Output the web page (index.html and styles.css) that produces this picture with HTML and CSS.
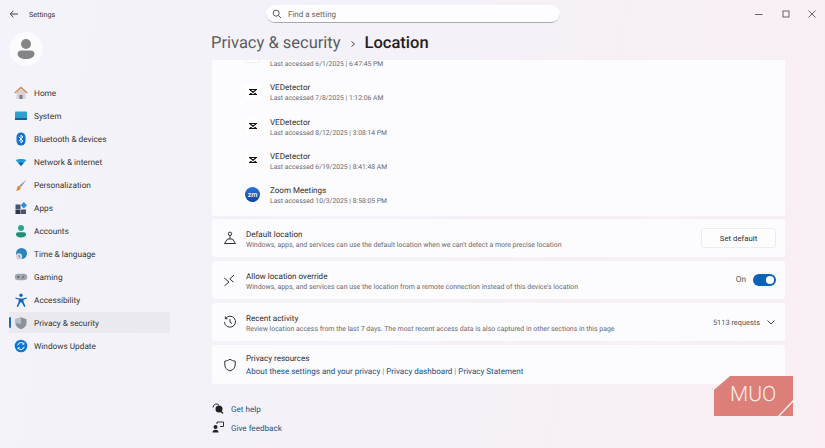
FILE: index.html
```html
<!DOCTYPE html>
<html lang="en">

<head>
    <meta charset="UTF-8">
    <meta name="viewport" content="width=device-width, initial-scale=1.0">
    <title>Settings</title>
    <link rel="stylesheet" href="styles.css">
</head>

<body>
    <div class="window">
        <!-- title bar -->
        <header class="titlebar">
            <div class="title-left">
                <svg class="back" width="10" height="10" viewBox="0 0 10 10"><path d="M9 5H1.2M4.4 1.8 1.2 5l3.2 3.2" fill="none" stroke="#444" stroke-width="1"/></svg>
                <span class="app-name">Settings</span>
            </div>
            <div class="search">
                <svg width="10" height="10" viewBox="0 0 10 10"><circle cx="4.2" cy="4.2" r="3" fill="none" stroke="#555" stroke-width="1"/><path d="M6.4 6.4 9 9" stroke="#555" stroke-width="1"/></svg>
                <span>Find a setting</span>
            </div>
            <div class="win-controls">
                <svg width="10" height="10" viewBox="0 0 10 10"><path d="M1 5.500h7.500" stroke="#666" stroke-width="1"/></svg>
                <svg width="10" height="10" viewBox="0 0 10 10"><rect x="2" y="2" width="6" height="6" fill="none" stroke="#666" stroke-width="1"/></svg>
                <svg width="10" height="10" viewBox="0 0 10 10"><path d="M1.500 1.500l7 7M8.500 1.500l-7 7" stroke="#666" stroke-width="1"/></svg>
            </div>
        </header>

        <div class="body-row">
            <!-- left nav -->
            <aside class="sidebar">
                <div class="avatar">
                    <svg width="20" height="22" viewBox="0 0 20 22"><circle cx="10" cy="6" r="5" fill="#858585"/><path d="M1.500 16c0-2.500 2-3.500 3.500-3.500h10c1.500 0 3.500 1 3.500 3.500 0 3-4 5-8.500 5s-8.500-2-8.500-5z" fill="#858585"/></svg>
                </div>
                <nav class="nav">
                    <a class="nav-item">
                        <svg width="14" height="14" viewBox="0 0 14 14"><path d="M2.500 6.500 7 3l4.500 3.500V13h-9z" fill="#d6d3d6"/><path d="M5.500 9h3v4h-3z" fill="#7a7a80"/><path d="M.8 7 7 1.500 13.200 7" fill="none" stroke="#d08a55" stroke-width="1.500"/></svg>
                        <span>Home</span>
                    </a>
                    <a class="nav-item">
                        <svg width="14" height="14" viewBox="0 0 14 14"><rect x="1" y="2.500" width="12" height="8" rx=".8" fill="#2f9fd0"/><rect x="1" y="9" width="12" height="2" fill="#1c5f8e"/></svg>
                        <span>System</span>
                    </a>
                    <a class="nav-item">
                        <svg width="14" height="14" viewBox="0 0 14 14"><rect x="2.500" y=".5" width="9" height="13" rx="4.500" fill="#0a73d8"/><path d="M4.800 4.800 9 9 7 11V3l2 2-4.200 4.200" fill="none" stroke="#fff" stroke-width=".9"/></svg>
                        <span>Bluetooth &amp; devices</span>
                    </a>
                    <a class="nav-item">
                        <svg width="14" height="14" viewBox="0 0 14 14"><path d="M1.500 5C4.500 3.500 9.500 3.500 12.500 5L7 11z" fill="#1f9ad6"/><path d="M4.500 8c1.500-.8 3.500-.8 5 0L7 11z" fill="#0c5fa8"/></svg>
                        <span>Network &amp; internet</span>
                    </a>
                    <a class="nav-item">
                        <svg width="14" height="14" viewBox="0 0 14 14"><path d="M12.500 1.500 5.500 7.500 7 9z" fill="#8d8fa0"/><path d="M5.300 7.800c-1.500.2-2 1.200-2.300 2.700-.2 1-.7 1.500-1.200 2 2 .3 4.700-.3 5-3z" fill="#e08a3c"/></svg>
                        <span>Personalization</span>
                    </a>
                    <a class="nav-item">
                        <svg width="14" height="14" viewBox="0 0 14 14"><rect x="1.500" y="3.500" width="5" height="4.500" fill="#46566e"/><rect x="1.500" y="8.500" width="5" height="4.500" fill="#2b3648"/><rect x="7" y="8.500" width="5" height="4.500" fill="#46566e"/><path d="M9.800 1 13 4.200 9.800 7.400 6.800 4.200z" fill="#2a8fd8"/></svg>
                        <span>Apps</span>
                    </a>
                    <a class="nav-item">
                        <svg width="14" height="14" viewBox="0 0 14 14"><circle cx="7" cy="4" r="3" fill="#2aa58e"/><path d="M2 10.500C2 9 3 8.300 4 8.300h6c1 0 2 .7 2 2.200 0 2-2.500 3-5 3s-5-1-5-3z" fill="#1e8f78"/></svg>
                        <span>Accounts</span>
                    </a>
                    <a class="nav-item">
                        <svg width="14" height="14" viewBox="0 0 14 14"><circle cx="7.500" cy="6.500" r="5.500" fill="#2a86b8"/><circle cx="5" cy="9.500" r="3.200" fill="#d5d8de"/><path d="M5 8v1.700l1.200.7" fill="none" stroke="#555" stroke-width=".7"/></svg>
                        <span>Time &amp; language</span>
                    </a>
                    <a class="nav-item">
                        <svg width="14" height="14" viewBox="0 0 14 14"><rect x=".8" y="3.800" width="12.400" height="6.500" rx="3.200" fill="#a3a7b0"/><path d="M3 7h2.500M4.200 5.800v2.400" stroke="#55585f" stroke-width=".8"/><circle cx="9.800" cy="6.200" r=".7" fill="#55585f"/><circle cx="8.800" cy="7.800" r=".7" fill="#55585f"/></svg>
                        <span>Gaming</span>
                    </a>
                    <a class="nav-item">
                        <svg width="14" height="14" viewBox="0 0 14 14"><circle cx="7" cy="2.200" r="1.700" fill="#0f69c4"/><path d="M1.500 4.500 5.200 5.500h3.600L12.500 4.500l.3 1-3.300 1.300V8.500l2 5-1.300.4L7.800 9.500H6.200L4 13.900l-1.300-.4 2-5V6.800L1.300 5.500z" fill="#0f69c4"/></svg>
                        <span>Accessibility</span>
                    </a>
                    <a class="nav-item active">
                        <svg width="14" height="14" viewBox="0 0 14 14"><path d="M7 1C5.500 2.200 3.500 2.800 1.500 3v4c0 3.200 2.500 5.200 5.500 6.200 3-1 5.500-3 5.500-6.200V3C10.500 2.800 8.500 2.200 7 1z" fill="#8b929b"/><path d="M7 1C5.500 2.200 3.500 2.800 1.500 3v4L7 8z" fill="#b9bec6"/></svg>
                        <span>Privacy &amp; security</span>
                    </a>
                    <a class="nav-item">
                        <svg width="14" height="14" viewBox="0 0 14 14"><circle cx="7" cy="7" r="6.300" fill="#0f78d4"/><path d="M3.800 6.300A3.300 3.300 0 0 1 9.800 5M10.200 7.700A3.300 3.300 0 0 1 4.200 9" fill="none" stroke="#fff" stroke-width="1"/><path d="M10.300 3.300v2.300H8zM3.700 10.700V8.400H6z" fill="#fff"/></svg>
                        <span>Windows Update</span>
                    </a>
                </nav>
            </aside>

            <!-- content -->
            <main class="content">
                <h1 class="breadcrumb">
                    <span class="crumb-parent">Privacy &amp; security</span>
                    <svg width="8" height="8" viewBox="0 0 8 8"><path d="M2.500 1.500 5.500 4l-3 2.500" fill="none" stroke="#444" stroke-width="1"/></svg>
                    <span class="crumb-current">Location</span>
                </h1>

                <section class="card app-list">
                    <!-- scrolled up: only the last line is still visible -->
                    <div class="app-row scrolled">
                        <span class="icon-stub"></span>
                        <div class="row-sub">Last accessed 6/1/2025&nbsp;|&nbsp;6:47:45 PM</div>
                    </div>
                    <div class="app-row">
                        <span class="app-icon"><svg width="10" height="10" viewBox="0 0 10 10"><path d="M1 2.500h8M1 7.500h8M2 3l6 4M8 3 2 7" fill="none" stroke="#111" stroke-width="1.200"/></svg></span>
                        <div class="app-text"><div class="row-title">VEDetector</div><div class="row-sub">Last accessed 7/8/2025&nbsp;|&nbsp;1:12:06 AM</div></div>
                    </div>
                    <div class="app-row">
                        <span class="app-icon"><svg width="10" height="10" viewBox="0 0 10 10"><path d="M1 2.500h8M1 7.500h8M2 3l6 4M8 3 2 7" fill="none" stroke="#111" stroke-width="1.200"/></svg></span>
                        <div class="app-text"><div class="row-title">VEDetector</div><div class="row-sub">Last accessed 8/12/2025&nbsp;|&nbsp;3:08:14 PM</div></div>
                    </div>
                    <div class="app-row">
                        <span class="app-icon"><svg width="10" height="10" viewBox="0 0 10 10"><path d="M1 2.500h8M1 7.500h8M2 3l6 4M8 3 2 7" fill="none" stroke="#111" stroke-width="1.200"/></svg></span>
                        <div class="app-text"><div class="row-title">VEDetector</div><div class="row-sub">Last accessed 6/19/2025&nbsp;|&nbsp;8:41:48 AM</div></div>
                    </div>
                    <div class="app-row">
                        <span class="app-icon zoom">zm</span>
                        <div class="app-text"><div class="row-title">Zoom Meetings</div><div class="row-sub">Last accessed 10/3/2025&nbsp;|&nbsp;8:58:05 PM</div></div>
                    </div>
                </section>

                <section class="card setting">
                    <svg class="setting-icon" width="14" height="14" viewBox="0 0 14 14"><circle cx="7" cy="2.800" r="1.700" fill="none" stroke="#333" stroke-width="1"/><path d="M7 4.500V8M4.500 8h5L12.500 12.500h-11z" fill="none" stroke="#333" stroke-width="1"/></svg>
                    <div class="setting-text">
                        <div class="row-title">Default location</div>
                        <div class="row-sub">Windows, apps, and services can use the default location when we can't detect a more precise location</div>
                    </div>
                    <button class="btn">Set default</button>
                </section>

                <section class="card setting">
                    <svg class="setting-icon" width="14" height="14" viewBox="0 0 14 14"><path d="M1.200 5 6 9 1.500 12.800M11 2 6.800 6l3.800 3.200" fill="none" stroke="#333" stroke-width="1"/></svg>
                    <div class="setting-text">
                        <div class="row-title">Allow location override</div>
                        <div class="row-sub">Windows, apps, and services can use the location from a remote connection instead of this device's location</div>
                    </div>
                    <span class="state">On</span>
                    <span class="toggle"><span class="knob"></span></span>
                </section>

                <section class="card setting">
                    <svg class="setting-icon" width="14" height="14" viewBox="0 0 14 14"><path d="M2.500 3.500A5.500 5.500 0 1 1 1.500 7M2.300 1.500v2.300h2.300M7 4v3.300l2 1.200" fill="none" stroke="#333" stroke-width="1"/></svg>
                    <div class="setting-text">
                        <div class="row-title">Recent activity</div>
                        <div class="row-sub">Review location access from the last 7 days. The most recent access data is also captured in other sections in this page</div>
                    </div>
                    <span class="state count">5113 requests</span>
                    <svg class="chev" width="10" height="10" viewBox="0 0 10 10"><path d="M1.500 3.500 5 7l3.500-3.500" fill="none" stroke="#444" stroke-width="1"/></svg>
                </section>

                <section class="card setting resources">
                    <svg class="setting-icon" width="14" height="14" viewBox="0 0 14 14"><path d="M7 1.200C5.500 2.400 3.600 3 1.800 3.100V7c0 3 2.200 4.900 5.200 5.900 3-1 5.200-2.900 5.200-5.900V3.100C10.400 3 8.500 2.400 7 1.200z" fill="none" stroke="#333" stroke-width="1"/></svg>
                    <div class="setting-text">
                        <div class="row-title">Privacy resources</div>
                        <div class="links"><a>About these settings and your privacy</a> <i>|</i> <a>Privacy dashboard</a> <i>|</i> <a>Privacy Statement</a></div>
                    </div>
                </section>

                <div class="help">
                    <a class="help-link">
                        <svg width="12" height="12" viewBox="0 0 12 12"><path d="M1 5.500a3.500 3.500 0 0 1 6-2.500" fill="none" stroke="#333" stroke-width="1"/><circle cx="7" cy="7" r="3.500" fill="#222"/><path d="M9 9.500 11 11.500" stroke="#222" stroke-width="1.200"/></svg>
                        <span>Get help</span>
                    </a>
                    <a class="help-link">
                        <svg width="12" height="12" viewBox="0 0 12 12"><circle cx="3.500" cy="6" r="2" fill="#222"/><path d="M.5 11.500c0-2 1-2.800 3-2.800s3 .8 3 2.800z" fill="#222"/><path d="M5 3V1h6.500v4.500H8" fill="none" stroke="#333" stroke-width="1"/></svg>
                        <span>Give feedback</span>
                    </a>
                </div>
            </main>
        </div>

        <!-- watermark -->
        <div class="watermark">
            <svg class="wm-shape" width="80" height="41" viewBox="0 0 80 41"><path d="M16 0H79V40H0V14z" fill="#dc7f78"/><path d="M64 41 80 24" stroke="#f6eef0" stroke-width="1.500"/></svg>
            <span class="wm-text">MUO</span>
        </div>
    </div>
</body>
</html>
```

FILE: styles.css
```css
* {
    box-sizing: border-box;
}

html,
body {
    margin: 0;
    height: 100%;
    overflow: hidden;
}

body {
    font-family: Roboto, "Noto Sans", sans-serif;
    color: #2b2b2b;
    text-rendering: geometricPrecision;
    background: linear-gradient(100deg, #f3f3f9 0%, #f4f1f8 45%, #f9eff4 100%);
}

.window {
    position: relative;
    display: flex;
    flex-direction: column;
    height: 448px;
}

/* title bar */
.titlebar {
    display: grid;
    grid-template-columns: 266px 294px 1fr;
    align-items: center;
    height: 28px;
}

.title-left {
    display: flex;
    align-items: center;
    gap: 10px;
    padding-left: 9px;
}

.app-name {
    font-size: 7.200px;
    color: #333;
}

.search {
    display: flex;
    align-items: center;
    gap: 6px;
    height: 18px;
    padding-left: 6px;
    background: #fdfcfe;
    border-radius: 9px;
    border-bottom: 1px solid #a9a9ad;
    font-size: 8px;
    color: #666;
}

.search span {
    padding-top: 2px;
}

.win-controls {
    display: flex;
    justify-content: flex-end;
    gap: 16.500px;
    padding-right: 8px;
}

.body-row {
    display: flex;
    flex: 1;
    min-height: 0;
}

/* left nav */
.sidebar {
    width: 212px;
    flex-shrink: 0;
    padding-left: 9px;
}

.avatar {
    display: flex;
    align-items: center;
    justify-content: center;
    width: 34px;
    height: 34px;
    margin-top: 4px;
    background: #fbfafc;
    border-radius: 50%;
}

.nav {
    margin-top: 15px;
}

.nav-item {
    position: relative;
    display: flex;
    align-items: center;
    gap: 6px;
    width: 161px;
    height: 23px;
    padding-left: 5px;
    font-size: 8.250px;
    color: #333;
}

.nav-item span {
    padding-top: 2px;
}

.nav-item.active::before {
    content: "";
    position: absolute;
    left: 0;
    top: 6px;
    width: 2px;
    height: 11px;
    background: #1e6fa8;
    border-radius: 1px;
}

.nav-item.active {
    background: linear-gradient(#ebe9f0, #ebe9f0) 0 1px / 100% 21px no-repeat;
}

/* content */
.content {
    flex: 1;
    min-width: 0;
    padding-right: 40px;
}

.breadcrumb {
    display: flex;
    align-items: center;
    gap: 8px;
    height: 32px;
    margin: 0 0 0 -1px;
    padding-bottom: 1px;
    font-size: 16.500px;
    font-weight: 400;
}

.crumb-parent {
    color: #5c5c60;
}

.crumb-current {
    color: #1f1f1f;
    font-weight: 500;
}

.card {
    background: #fcfbfd;
    border-radius: 3px;
}

.app-list {
    display: flex;
    flex-direction: column;
    justify-content: flex-end;
    height: 156px;
    overflow: hidden;
    padding-bottom: 4px;
    padding-left: 33px;
    border-radius: 0 0 3px 3px;
}

.app-row {
    display: flex;
    flex-shrink: 0;
    align-items: center;
    gap: 10px;
    height: 34.400px;
}

.app-row.scrolled {
    align-items: flex-start;
    height: 14.400px;
}

.app-row.scrolled .row-sub {
    line-height: 8px;
}

.app-text {
    padding-top: 3px;
}

.app-list .row-sub {
    font-size: 6.800px;
}

.icon-stub {
    width: 15px;
    height: 3px;
    background: #fff;
    border: 1px solid #eeedf1;
    border-top: 0;
    border-radius: 0 0 4px 4px;
}

.app-icon {
    display: flex;
    align-items: center;
    justify-content: center;
    width: 15px;
    height: 15px;
    border-radius: 3px;
    background: #fff;
}

.app-icon.zoom {
    border-radius: 50%;
    background: linear-gradient(#2a78dc, #12439c);
    color: #fff;
    font-size: 7px;
    font-weight: 500;
}

.row-title {
    font-size: 8.050px;
    line-height: 10px;
    color: #2d2d2d;
}

.row-sub {
    font-size: 6.950px;
    line-height: 10px;
    color: #6a6a6e;
}

.setting {
    display: flex;
    align-items: center;
    height: 38px;
    margin-top: 4px;
    padding: 0 9px 0 11px;
}

.app-list + .setting {
    margin-top: 3px;
}

.setting-icon {
    flex-shrink: 0;
    margin-right: 9px;
}

.setting-text {
    flex: 1;
    min-width: 0;
    padding-top: 3px;
}

.resources .setting-text {
    padding-top: 0;
}

.btn {
    width: 75px;
    height: 20px;
    padding: 0;
    background: #fefdfe;
    border: 1px solid #ececef;
    border-radius: 3px;
    font-family: inherit;
    font-size: 7.800px;
    color: #2d2d2d;
}

.state {
    margin-right: 7px;
    font-size: 8.300px;
    color: #555;
}

.state.count {
    font-size: 7.400px;
}

.toggle {
    display: flex;
    align-items: center;
    justify-content: flex-end;
    width: 23px;
    height: 12px;
    padding-right: 2px;
    background: #0b63b5;
    border-radius: 6px;
}

.knob {
    width: 8px;
    height: 8px;
    background: #fff;
    border-radius: 50%;
}

.chev {
    margin-left: -1px;
}

.resources {
    height: 39px;
}

.links {
    margin-top: 3px;
    font-size: 8.050px;
    color: #1d4f7f;
}

.links i {
    font-style: normal;
    color: #888;
}

.help {
    display: flex;
    flex-direction: column;
    gap: 4px;
    margin-top: 16px;
}

.help-link {
    display: flex;
    align-items: center;
    gap: 7px;
    height: 15px;
    font-size: 8.100px;
    color: #27527f;
}

.help-link span {
    padding-top: 2px;
}

/* watermark */
.watermark {
    position: absolute;
    left: 714px;
    top: 376px;
    width: 80px;
    height: 41px;
}

.wm-shape {
    display: block;
}

.wm-text {
    position: absolute;
    left: 16px;
    top: 6px;
    font-size: 21px;
    font-weight: 300;
    line-height: 27px;
    color: #fbeeed;
}
```
